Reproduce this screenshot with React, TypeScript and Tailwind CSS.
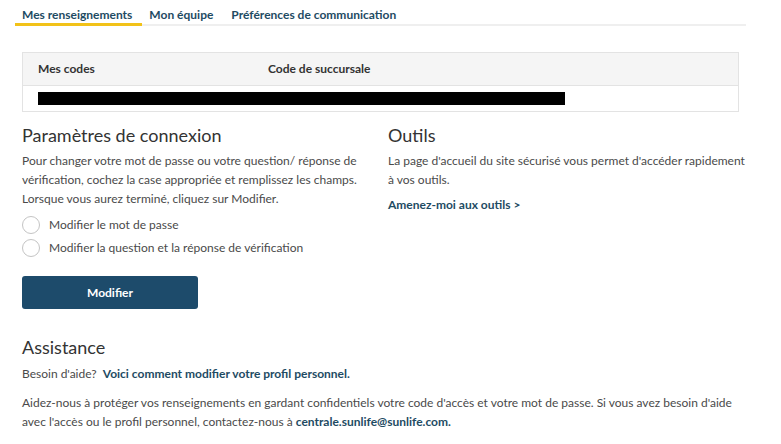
import React, { useState } from 'react';

const TABS = ['Mes renseignements', 'Mon équipe', 'Préférences de communication'];

const RadioRow: React.FC<{ label: string; checked: boolean; onClick: () => void }> = ({ label, checked, onClick }) => (
  <label onClick={onClick} className="flex items-center h-[23px] cursor-pointer">
    <span className="w-[18px] h-[18px] rounded-full border border-[#c4c4c4] bg-white flex items-center justify-center">
      {checked && <span className="w-[8px] h-[8px] rounded-full bg-[#1d4b6b]" />}
    </span>
    <span className="ml-[9px] text-[12px] text-[#4a4a4a]">{label}</span>
  </label>
);

const App: React.FC = () => {
  const [tab, setTab] = useState(0);
  const [choice, setChoice] = useState<number | null>(null);

  return (
    <div className="w-[781px] h-[444px] bg-white overflow-hidden text-[#444]" style={{ fontFamily: 'Lato, "Open Sans", sans-serif' }}>
      {/* tabs */}
      <div className="ml-[15px] w-[731px] mt-[7px] flex border-b-2 border-[#efefef]">
        {TABS.map((t, i) => (
          <button
            key={t}
            onClick={() => setTab(i)}
            className={`px-[7px] leading-[16px] text-[12px] font-bold text-[#1e4b63] -mb-[2px] border-b-[3px] ${i === 0 ? 'pr-[10px]' : ''} ${i === 2 ? 'ml-[4px]' : ''} ${tab === i ? 'border-[#f2c218]' : 'border-transparent'}`}
          >
            {t}
          </button>
        ))}
      </div>

      <div className="px-[22px]">
        {/* codes table */}
        <div className="mt-[26px] w-[717px] border border-[#e3e3e3]">
          <div className="h-[33px] bg-[#f5f5f5] border-b border-[#e3e3e3] flex items-center pl-[15px] text-[12px] font-bold text-[#333]">
            <span className="w-[230px]">Mes codes</span>
            <span>Code de succursale</span>
          </div>
          <div className="h-[25px] flex items-center pl-[15px]">
            <div className="w-[527px] h-[13px] bg-black" />
          </div>
        </div>

        {/* two columns */}
        <div className="grid grid-cols-[351px_362px] gap-[15px] mt-[10px]">
          <div>
            <h2 className="text-[18px] leading-[26px] text-[#333]">Paramètres de connexion</h2>
            <p className="mt-[3px] text-[12px] leading-[19px] text-[#4a4a4a]">
              Pour changer votre mot de passe ou votre question/ réponse de vérification, cochez la case appropriée et remplissez les champs. Lorsque vous aurez terminé, cliquez sur Modifier.
            </p>
            <div className="mt-[5px] flex flex-col">
              <RadioRow label="Modifier le mot de passe" checked={choice === 0} onClick={() => setChoice(0)} />
              <RadioRow label="Modifier la question et la réponse de vérification" checked={choice === 1} onClick={() => setChoice(1)} />
            </div>
            <button className="mt-[17px] w-[176px] h-[33px] rounded-[3px] bg-[#1d4b6b] text-white text-[12px] font-bold">
              Modifier
            </button>
          </div>
          <div>
            <h2 className="text-[18px] leading-[26px] text-[#333]">Outils</h2>
            <p className="mt-[3px] text-[12px] leading-[19px] text-[#4a4a4a]">
              La page d'accueil du site sécurisé vous permet d'accéder rapidement à vos outils.
            </p>
            <a href="#" className="block mt-[7px] text-[12px] font-bold text-[#1e4b63]">Amenez-moi aux outils &gt;</a>
          </div>
        </div>

        {/* assistance */}
        <h2 className="mt-[25px] text-[18px] leading-[26px] text-[#333]">Assistance</h2>
        <p className="mt-[4px] text-[12px] leading-[19px] text-[#4a4a4a]">
          Besoin d'aide?&nbsp; <a href="#" className="font-bold text-[#1e4b63]">Voici comment modifier votre profil personnel.</a>
        </p>
        <p className="mt-[10px] w-[717px] text-[12px] leading-[19px] text-[#4a4a4a]">
          Aidez-nous à protéger vos renseignements en gardant confidentiels votre code d'accès et votre mot de passe. Si vous avez besoin d'aide avec l'accès ou le profil personnel, contactez-nous à <a href="#" className="font-bold text-[#1e4b63]">centrale.sunlife@sunlife.com.</a>
        </p>
      </div>
    </div>
  );
};

export default App;
